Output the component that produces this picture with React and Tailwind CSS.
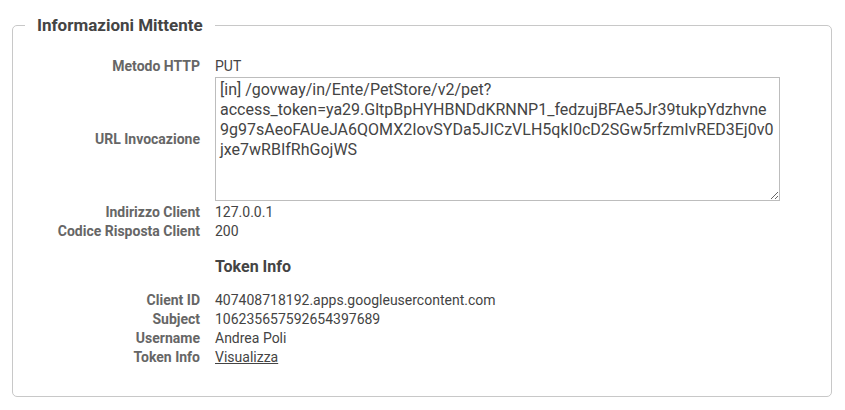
export default function App() {
  const rows1 = [
    ['Indirizzo Client', '127.0.0.1'],
    ['Codice Risposta Client', '200'],
  ]
  const rows2 = [
    ['Client ID', '407408718192.apps.googleusercontent.com'],
    ['Subject', '106235657592654397689'],
    ['Username', 'Andrea Poli'],
  ]
  const url =
    '[in] /govway/in/Ente/PetStore/v2/pet?access_token=ya29.GltpBpHYHBNDdKRNNP1_fedzujBFAe5Jr39tukpYdzhvne9g97sAeoFAUeJA6QOMX2IovSYDa5JICzVLH5qkI0cD2SGw5rfzmIvRED3Ej0v0jxe7wRBIfRhGojWS'

  return (
    <div className="w-[845px] h-[410px] bg-white pt-[13px] px-[12px]" style={{ fontFamily: 'Roboto, "Liberation Sans", sans-serif' }}>
      <fieldset className="border border-[#c8c8c8] rounded-[5px] w-[820px] h-[384px] pt-[20px]">
        <legend className="ml-[12px] px-[12px] text-[17px] font-bold text-[#444] leading-[24px]">Informazioni Mittente</legend>

        <div className="grid grid-cols-[187px_1fr] gap-x-[15px] text-[14px] leading-[19px]">
          <div className="text-right font-bold text-[#666]">Metodo HTTP</div>
          <div className="text-[#444]">PUT</div>

          <div className="text-right font-bold text-[#666] self-center">URL Invocazione</div>
          <div className="pt-[1px] pb-[2px]">
            <textarea
              readOnly
              value={url}
              className="block w-[565px] h-[124px] border border-[#bdbdbd] px-[4px] py-[2px] text-[16px] leading-[20px] text-[#444] outline-none"
              style={{ fontFamily: 'Roboto, "Liberation Sans", sans-serif' }}
            />
          </div>

          {rows1.map(([k, v]) => (
            <div key={k} className="contents">
              <div className="text-right font-bold text-[#666]">{k}</div>
              <div className="text-[#444]">{v}</div>
            </div>
          ))}

          <div />
          <div className="pt-[16px] pb-[14px] text-[16px] font-bold text-[#444] leading-[20px]">Token Info</div>

          {rows2.map(([k, v]) => (
            <div key={k} className="contents">
              <div className="text-right font-bold text-[#666]">{k}</div>
              <div className="text-[#444]">{v}</div>
            </div>
          ))}
          <div className="text-right font-bold text-[#666]">Token Info</div>
          <div className="text-[#444]"><a className="underline">Visualizza</a></div>
        </div>
      </fieldset>
    </div>
  )
}
